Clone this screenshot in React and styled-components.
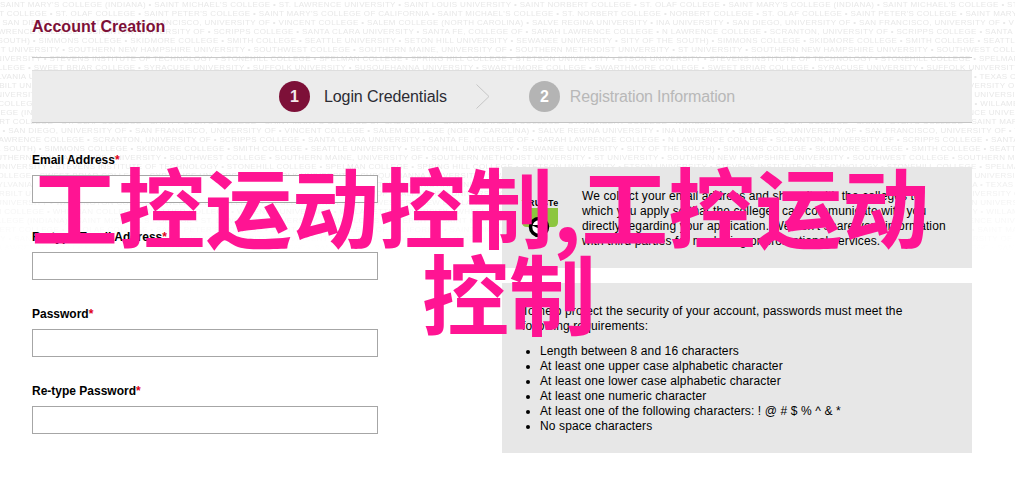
import React from "react";
import styled, { createGlobalStyle } from "styled-components";

const GlobalStyle = createGlobalStyle`
html, body {
    margin: 0;
    padding: 0;
    background: #fff;
}
body {
    font-family: "Liberation Sans", Arial, sans-serif;
    color: #000;
    overflow: hidden;
}
`;

const Page = styled.div`
position: relative;
width: 1015px;
height: 482px;
overflow: hidden;
padding: 17px 43px 0 32px;
box-sizing: border-box;
`;

const Watermark = styled.div`
position: absolute;
top: 0;
left: 0;
width: 1015px;
height: 252px;
overflow: hidden;
font-size: 8px;
line-height: 9px;
letter-spacing: 0.35px;
white-space: nowrap;
color: #e8e8e8;
filter: blur(0.3px);
-webkit-mask-image: linear-gradient(to bottom, #000 0%, #000 60%, transparent 100%);
mask-image: linear-gradient(to bottom, #000 0%, #000 60%, transparent 100%);
`;

const WatermarkLine = styled.div`
margin-left: ${props => props.$shift}px;
`;

const Content = styled.div`
position: relative;
`;

const Title = styled.h1`
margin: 0 0 12px;
padding-bottom: 20px;
border-bottom: 1px solid #c8c8c8;
font-size: 16px;
line-height: 20px;
font-weight: bold;
color: #7d1038;
`;

const Steps = styled.div`
height: 51px;
background: #ececec;
border-top: 1px solid #dedede;
border-bottom: 1px solid #c4c4c4;
display: flex;
align-items: center;
padding-left: 247px;
margin-bottom: 30px;
`;

const Step = styled.div`
display: flex;
align-items: center;
gap: ${props => props.$active ? 14 : 10}px;
font-size: 16px;
letter-spacing: ${props => props.$active ? -0.1 : -0.2}px;
color: ${props => props.$active ? "#2b2b33" : "#b8b8b8"};
`;

const StepNumber = styled.span`
width: 31px;
height: 31px;
border-radius: 50%;
display: flex;
align-items: center;
justify-content: center;
font-size: 16px;
font-weight: bold;
color: ${props => props.$active ? "#f4e8ec" : "#fff"};
background: ${props => props.$active ? "#7d1038" : "#b4b4b4"};
`;

const ChevronBox = styled.span`
display: flex;
margin: 0 39px 0 29px;
`;

const Columns = styled.div`
display: grid;
grid-template-columns: 346px 470px;
justify-content: space-between;
width: 940px;
`;

const Form = styled.div`
display: flex;
flex-direction: column;
gap: 27px;
`;

const Field = styled.div`
display: flex;
flex-direction: column;
gap: 8px;
`;

const Label = styled.label`
font-size: 12px;
line-height: 14px;
font-weight: bold;
color: #000;
span {
    color: #e0001b;
}
`;

const Input = styled.input`
width: 346px;
height: 28px;
box-sizing: border-box;
border: 1px solid #a6a6a6;
background: #fff;
padding: 0 6px;
`;

const Side = styled.div`
display: flex;
flex-direction: column;
gap: 15px;
padding-top: 14px;
`;

const Notice = styled.div`
background: #e7e7e7;
font-size: 12px;
letter-spacing: 0.12px;
line-height: 15px;
`;

const PrivacyNotice = styled(Notice)`
height: 101px;
box-sizing: border-box;
padding: 22px 20px 0 20px;
display: flex;
gap: 20px;
`;

const Badge = styled.div`
width: 40px;
flex: none;
padding-top: 9px;
`;

const BadgeText = styled.div`
font-size: 9px;
line-height: 10px;
font-weight: bold;
letter-spacing: 0.4px;
white-space: nowrap;
`;

const PrivacyText = styled.p`
margin: 0;
width: 368px;
`;

const SecurityNotice = styled(Notice)`
height: 170px;
box-sizing: border-box;
padding: 21px 20px 0 20px;
p {
    margin: 0 0 10px;
    width: 400px;
}
`;

const Rules = styled.ul`
margin: 0;
padding: 0 0 0 18px;
list-style: disc;
`;

const Overlay = styled.div`
position: absolute;
top: 161px;
left: 31px;
font-family: "Noto Sans CJK SC", "Noto Sans CJK JP", sans-serif;
font-size: 87px;
line-height: 87px;
font-weight: bold;
white-space: nowrap;
color: #ff1493;
`;

const OverlayLine = styled.div`
margin-left: ${props => props.$indent || 0}px;
`;

const collegeLines = [
    "SAINT MARY'S COLLEGE (INDIANA) • SAINT MICHAEL'S COLLEGE • ST. LAWRENCE UNIVERSITY • SAINT LOUIS UNIVERSITY • SAINT NORBERT COLLEGE • ST. OLAF COLLEGE",
    "NORBERT COLLEGE • ST. OLAF COLLEGE • SAINT PETER'S COLLEGE • SAINT MARY'S COLLEGE OF CALIFORNIA • SAINT MICHAEL'S COLLEGE • ST. NORBERT COLLEGE",
    "INA UNIVERSITY • SAN DIEGO, UNIVERSITY OF • SAN FRANCISCO, UNIVERSITY OF • VINCENT COLLEGE • SALEM COLLEGE (NORTH CAROLINA) • SALVE REGINA UNIVERSITY",
    "N LAWRENCE COLLEGE • SCRANTON, UNIVERSITY OF • SCRIPPS COLLEGE • SANTA CLARA UNIVERSITY • SANTA FE, COLLEGE OF • SARAH LAWRENCE COLLEGE",
    "SITY OF THE SOUTH) • SIMMONS COLLEGE • SKIDMORE COLLEGE • SMITH COLLEGE • SEATTLE UNIVERSITY • SETON HILL UNIVERSITY • SEWANEE UNIVERSITY",
    "ST UNIVERSITY • SOUTHERN NEW HAMPSHIRE UNIVERSITY • SOUTHWEST COLLEGE • SOUTHERN MAINE, UNIVERSITY OF • SOUTHERN METHODIST UNIVERSITY",
    "ETSON UNIVERSITY • STEVENS INSTITUTE OF TECHNOLOGY • STONEHILL COLLEGE • SPELMAN COLLEGE • SPRING HILL COLLEGE • STETSON UNIVERSITY",
    "SWARTHMORE COLLEGE • SWEET BRIAR COLLEGE • SYRACUSE UNIVERSITY • SUFFOLK UNIVERSITY • SUSQUEHANNA UNIVERSITY • SWARTHMORE COLLEGE",
    "ANSYLVANIA UNIVERSITY • TRINITY COLLEGE • TRINITY UNIVERSITY • UNIVERSITY OF TULSA • TEXAS CHRISTIAN UNIVERSITY • TRANSYLVANIA",
    "SITY • VANDERBILT UNIVERSITY • VASSAR COLLEGE • VILLANOVA UNIVERSITY • VIRGINIA, UNIVERSITY OF • VALPARAISO UNIVERSITY • WAKE FOREST",
    "UNIVERSITY • WASHINGTON COLLEGE • WELLESLEY COLLEGE • WESLEYAN UNIVERSITY • WESTERN NEW ENGLAND UNIVERSITY • WESTMINSTER COLLEGE",
    "WHEATON COLLEGE • WHITMAN COLLEGE • WHITTIER COLLEGE • WIDENER UNIVERSITY • WILLAMETTE UNIVERSITY • WHEELOCK COLLEGE • WHITTIER",
];

// the pattern repeats down the page, a row every 9px
const watermarkRows = Array.from({ length: 28 }, (_, i) => {
    const line = collegeLines[i % collegeLines.length];
    return `${line} • ${line}`;
});

const fields = ["Email Address", "Re-type Email Address", "Password", "Re-type Password"];

const rules = [
    "Length between 8 and 16 characters",
    "At least one upper case alphabetic character",
    "At least one lower case alphabetic character",
    "At least one numeric character",
    "At least one of the following characters: ! @ # $ % ^ & *",
    "No space characters",
];

const Chevron = () => (
    <svg width="14" height="25" viewBox="0 0 14 25" fill="none">
        <path d="M0.5 0.5 L13 12.5 L0.5 24.5" stroke="#c6c6c6" strokeWidth="1" />
    </svg>
);

const TrusteSeal = () => (
    <svg width="36" height="30" viewBox="0 0 36 30" style={{ display: "block" }}>
        <path d="M0 0 H36 V14 Q36 19 31 19 H5 Q0 19 0 14 Z" fill="#8cc63f" />
        <circle cx="17" cy="19" r="8.5" fill="#fff" stroke="#000" strokeWidth="3.5" />
        <path d="M9 17 H18 V21 Z" fill="#000" />
    </svg>
);

export default function App() {
    return (
        <Page>
            <GlobalStyle />
            <Watermark aria-hidden="true">
                {watermarkRows.map((line, i) => (
                    <WatermarkLine key={i} $shift={-((i * 37) % 90)}>{line}</WatermarkLine>
                ))}
            </Watermark>
            <Content>
                <Title>Account Creation</Title>
                <Steps>
                    <Step $active>
                        <StepNumber $active>1</StepNumber>
                        Login Credentials
                    </Step>
                    <ChevronBox><Chevron /></ChevronBox>
                    <Step>
                        <StepNumber>2</StepNumber>
                        Registration Information
                    </Step>
                </Steps>
                <Columns>
                    <Form>
                        {fields.map(field => (
                            <Field key={field}>
                                <Label>{field}<span>*</span></Label>
                                <Input />
                            </Field>
                        ))}
                    </Form>
                    <Side>
                        <PrivacyNotice>
                            <Badge>
                                <BadgeText>TRUSTe</BadgeText>
                                <TrusteSeal />
                            </Badge>
                            <PrivacyText>
                                We collect your email address and share it with the colleges to which you apply so that the colleges can communicate with you directly regarding your application. We don't share your information with third parties for marketing or promotional services.
                            </PrivacyText>
                        </PrivacyNotice>
                        <SecurityNotice>
                            <p>To help protect the security of your account, passwords must meet the following requirements:</p>
                            <Rules>
                                {rules.map(rule => <li key={rule}>{rule}</li>)}
                            </Rules>
                        </SecurityNotice>
                    </Side>
                </Columns>
            </Content>
            <Overlay>
                <OverlayLine>工控运动控制,工控运动</OverlayLine>
                <OverlayLine $indent={391}>控制</OverlayLine>
            </Overlay>
        </Page>
    );
}
